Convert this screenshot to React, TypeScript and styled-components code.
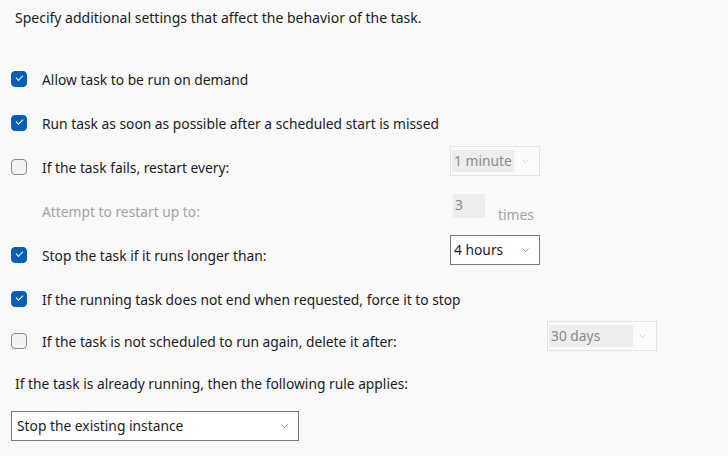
import styled, { createGlobalStyle } from "styled-components";

const Global = createGlobalStyle`
  body {
    margin: 0;
    background: #f9f9f9;
    font-family: "Noto Sans", "Open Sans", sans-serif;
    font-size: 13.8px;
    color: #1b1b1b;
  }
`;

const Chevron = ({ color }: { color: string }) => (
  <svg width="7" height="4" viewBox="0 0 7 4">
    <path d="M0.5 0.5 L3.5 3.5 L6.5 0.5" fill="none" stroke={color} strokeWidth="1" />
  </svg>
);

const Select = ({
  value,
  width,
  disabled,
  innerWidth,
  pad = 1,
  lift = 0,
}: {
  value: string;
  width: number;
  disabled?: boolean;
  innerWidth?: number;
  pad?: number;
  lift?: number;
}) => (
  <SelectBox $width={width} $disabled={disabled} $pad={pad} $lift={lift}>
    <SelectText $disabled={disabled} style={innerWidth ? { width: innerWidth } : undefined}>
      {value}
    </SelectText>
    <Chevron color={disabled ? "#cfcfcf" : "#9a9a9a"} />
  </SelectBox>
);

const App = () => {
  return (
    <>
      <Global />
      <Page>
        <Intro>Specify additional settings that affect the behavior of the task.</Intro>
        <Rows>
          <Row>
            <Label>
              <Check $checked />
              Allow task to be run on demand
            </Label>
          </Row>
          <Row>
            <Label>
              <Check $checked />
              Run task as soon as possible after a scheduled start is missed
            </Label>
          </Row>
          <Row>
            <Label>
              <Check />
              If the task fails, restart every:
            </Label>
            <Select value="1 minute" width={90} disabled innerWidth={62} lift={6} />
          </Row>
          <Row>
            <Label $muted $indent>
              Attempt to restart up to:
            </Label>
            <NumberBox>3</NumberBox>
            <Unit>times</Unit>
          </Row>
          <Row>
            <Label>
              <Check $checked />
              Stop the task if it runs longer than:
            </Label>
            <Select value="4 hours" width={90} lift={5} />
          </Row>
          <Row>
            <Label>
              <Check $checked />
              If the running task does not end when requested, force it to stop
            </Label>
          </Row>
          <LastRow>
            <Label>
              <Check />
              If the task is not scheduled to run again, delete it after:
            </Label>
            <Offset>
              <Select value="30 days" width={110} disabled innerWidth={84} lift={5} />
            </Offset>
          </LastRow>
        </Rows>
        <RuleText>If the task is already running, then the following rule applies:</RuleText>
        <RuleSelect>
          <Select value="Stop the existing instance" width={288} pad={3} />
        </RuleSelect>
      </Page>
    </>
  );
};

const Page = styled.div`
  width: 728px;
  height: 456px;
  box-sizing: border-box;
  padding-left: 11px;
  display: flex;
  flex-direction: column;
`;

const Intro = styled.div`
  height: 36px;
  line-height: 36px;
  padding-left: 4px;
  font-size: 14px;
`;

const Rows = styled.div`
  margin-top: 21px;
  display: flex;
  flex-direction: column;
`;

const Row = styled.div`
  height: 44px;
  display: flex;
  align-items: center;
`;

const LastRow = styled(Row)`
  margin-top: -2px;
  margin-bottom: 2px;
`;

const Label = styled.div<{ $muted?: boolean; $indent?: boolean }>`
  flex: 0 0 439px;
  display: flex;
  align-items: center;
  gap: 15px;
  padding-left: ${(p) => (p.$indent ? "31px" : "0")};
  box-sizing: border-box;
  color: ${(p) => (p.$muted ? "#a3a3a3" : "#1b1b1b")};
  white-space: nowrap;
`;

const Check = styled.span<{ $checked?: boolean }>`
  flex: 0 0 auto;
  width: 16px;
  height: 16px;
  box-sizing: border-box;
  border-radius: 4px;
  border: 1px solid ${(p) => (p.$checked ? "#005fb8" : "#8a8a8a")};
  background: ${(p) => (p.$checked ? "#005fb8" : "#f3f3f3")};
  position: relative;

  &::after {
    content: "";
    display: ${(p) => (p.$checked ? "block" : "none")};
    position: absolute;
    left: 4px;
    top: 3px;
    width: 6px;
    height: 3px;
    border-left: 1px solid #fff;
    border-bottom: 1px solid #fff;
    transform: rotate(-45deg);
  }
`;

const SelectBox = styled.div<{ $width: number; $disabled?: boolean; $pad: number; $lift: number }>`
  width: ${(p) => p.$width}px;
  height: 30px;
  box-sizing: border-box;
  display: flex;
  align-items: center;
  justify-content: space-between;
  margin-bottom: ${(p) => p.$lift * 2}px;
  padding: 0 10px 0 ${(p) => p.$pad}px;
  background: ${(p) => (p.$disabled ? "#fbfbfb" : "#ffffff")};
  border: 1px solid ${(p) => (p.$disabled ? "#e3e3e3" : "#7a7a7a")};
`;

const SelectText = styled.span<{ $disabled?: boolean }>`
  height: 22px;
  line-height: 22px;
  padding-left: 2px;
  box-sizing: border-box;
  background: ${(p) => (p.$disabled ? "#ededed" : "transparent")};
  color: ${(p) => (p.$disabled ? "#8b8b8b" : "#1b1b1b")};
  white-space: nowrap;
`;

const NumberBox = styled.div`
  width: 32px;
  height: 24px;
  margin-left: 3px;
  margin-top: -10px;
  padding-left: 2px;
  box-sizing: border-box;
  line-height: 22px;
  background: #ededed;
  color: #8b8b8b;
`;

const Unit = styled.span`
  margin-left: 13px;
  margin-top: 6px;
  color: #a3a3a3;
`;

const Offset = styled.div`
  margin-left: 97px;
`;

const RuleText = styled.div`
  height: 38px;
  line-height: 38px;
  padding-left: 4px;
`;

const RuleSelect = styled.div`
  margin-top: 8px;
`;

export default App;
